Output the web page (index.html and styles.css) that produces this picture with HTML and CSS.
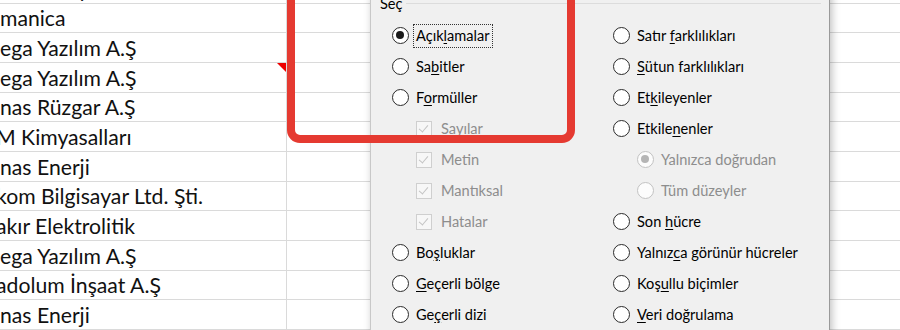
FILE: index.html
```html
<!DOCTYPE html>
<html lang="tr">
<head>
    <meta charset="UTF-8">
    <title>Git - Özel</title>
    <link rel="stylesheet" href="styles.css">
</head>
<body>
    <div class="sheet">
        <div class="row"><div class="cell name"><span>ılmaz Boya</span></div><div class="cell"></div></div>
        <div class="row"><div class="cell name"><span>manica</span></div><div class="cell"></div></div>
        <div class="row"><div class="cell name"><span>ega Yazılım A.Ş</span></div><div class="cell"></div></div>
        <div class="row"><div class="cell name has-note"><span>ega Yazılım A.Ş</span></div><div class="cell"></div></div>
        <div class="row"><div class="cell name"><span>nas Rüzgar A.Ş</span></div><div class="cell"></div></div>
        <div class="row"><div class="cell name"><span class="cut">M Kimyasalları</span></div><div class="cell"></div></div>
        <div class="row"><div class="cell name"><span>nas Enerji</span></div><div class="cell"></div></div>
        <div class="row"><div class="cell name"><span class="cut">kom Bilgisayar Ltd. Şti.</span></div><div class="cell"></div></div>
        <div class="row"><div class="cell name"><span class="cut">akır Elektrolitik</span></div><div class="cell"></div></div>
        <div class="row"><div class="cell name"><span>ega Yazılım A.Ş</span></div><div class="cell"></div></div>
        <div class="row"><div class="cell name"><span class="cut">adolum İnşaat A.Ş</span></div><div class="cell"></div></div>
        <div class="row"><div class="cell name"><span>nas Enerji</span></div><div class="cell"></div></div>
        <div class="row"><div class="cell name"><span></span></div><div class="cell"></div></div>
    </div>

    <!-- vurgulama çerçevesi -->
    <div class="highlight"></div>

    <div class="dialog">
        <div class="group-title"><span>Seç</span><div class="group-line"></div></div>
        <div class="options">
            <div class="col">
                <div class="opt"><span class="radio checked"></span><span class="label focus">Açık<u>l</u>amalar</span></div>
                <div class="opt"><span class="radio"></span><span class="label">Sa<u>b</u>itler</span></div>
                <div class="opt"><span class="radio"></span><span class="label">F<u>o</u>rmüller</span></div>
                <div class="opt sub disabled"><span class="check"></span><span class="label">Sayılar</span></div>
                <div class="opt sub disabled"><span class="check"></span><span class="label">Metin</span></div>
                <div class="opt sub disabled"><span class="check"></span><span class="label">Mantıksal</span></div>
                <div class="opt sub disabled"><span class="check"></span><span class="label">Hatalar</span></div>
                <div class="opt"><span class="radio"></span><span class="label">Bo<u>ş</u>luklar</span></div>
                <div class="opt"><span class="radio"></span><span class="label"><u>G</u>eçerli bölge</span></div>
                <div class="opt"><span class="radio"></span><span class="label">Ge<u>ç</u>erli dizi</span></div>
            </div>
            <div class="col">
                <div class="opt"><span class="radio"></span><span class="label">Satır <u>f</u>arklılıkları</span></div>
                <div class="opt"><span class="radio"></span><span class="label"><u>S</u>ütun farklılıkları</span></div>
                <div class="opt"><span class="radio"></span><span class="label">Et<u>k</u>ileyenler</span></div>
                <div class="opt"><span class="radio"></span><span class="label">Etkile<u>n</u>enler</span></div>
                <div class="opt sub disabled"><span class="radio checked"></span><span class="label">Yalnızca doğrudan</span></div>
                <div class="opt sub disabled"><span class="radio"></span><span class="label">Tüm düzeyler</span></div>
                <div class="opt"><span class="radio"></span><span class="label">Son <u>h</u>ücre</span></div>
                <div class="opt"><span class="radio"></span><span class="label">Yalnız<u>c</u>a görünür hücreler</span></div>
                <div class="opt"><span class="radio"></span><span class="label">Koş<u>u</u>llu biçimler</span></div>
                <div class="opt"><span class="radio"></span><span class="label"><u>V</u>eri doğrulama</span></div>
            </div>
        </div>
    </div>
</body>
</html>
```

FILE: styles.css
```css
body {
    margin: 0;
    width: 900px;
    height: 330px;
    overflow: hidden;
    position: relative;
    background-color: #fff;
    font-family: 'Lato', sans-serif;
    color: #000;
}
.sheet {
    margin-top: -26px;
}
.row {
    display: flex;
    height: 29.67px;
    box-sizing: border-box;
    border-bottom: 1px solid #dadada;
}
.cell {
    flex: 1;
    display: flex;
    align-items: flex-end;
    overflow: hidden;
    white-space: nowrap;
}
.cell.name {
    flex: none;
    width: 287px;
    box-sizing: border-box;
    border-right: 1px solid #dadada;
    position: relative;
    font-size: 21.2px;
    color: #111;
    padding: 0 0 1px 0;
}
.cut {
    margin-left: -4px;
}
.has-note::after {
    content: '';
    position: absolute;
    top: 0;
    right: 0;
    border-top: 9px solid #e00;
    border-left: 9px solid transparent;
}

.highlight {
    position: absolute;
    left: 287px;
    top: -30px;
    width: 288px;
    height: 173px;
    box-sizing: border-box;
    border: 8px solid #e53a31;
    border-radius: 13px;
    z-index: 2;
}

.dialog {
    position: absolute;
    left: 370px;
    top: -8px;
    width: 460px;
    height: 360px;
    box-sizing: border-box;
    background-color: #f0f0f0;
    border-left: 1px solid #c8c8c8;
    border-right: 1px solid #9a9a9a;
    box-shadow: 2px 0 8px rgba(0,0,0,0.25);
    font-family: 'Lato', sans-serif;
    font-size: 14.6px;
    padding: 0 8px 0 8px;
    z-index: 1;
}
.group-title {
    display: flex;
    align-items: center;
    height: 22px;
}
.group-title span {
    padding: 0 3px 0 1px;
}
.group-line {
    flex: 1;
    border-top: 1px solid #dcdcdc;
}
.options {
    display: flex;
    padding: 6px 0 0 13px;
}
.col {
    display: flex;
    flex-direction: column;
}
.col:first-child {
    width: 221px;
}
.opt {
    display: flex;
    align-items: center;
    height: 31px;
    gap: 5px;
}
.opt.sub {
    padding-left: 24px;
}
.label {
    padding: 2px 2px;
    line-height: 18px;
}
.label u {
    text-underline-offset: 2px;
}
.focus {
    outline: 1px dotted #333;
}
.disabled .label {
    color: #8d8d8d;
}
.radio {
    width: 17px;
    height: 17px;
    box-sizing: border-box;
    border: 1.8px solid #2b2b2b;
    border-radius: 50%;
    background-color: #fff;
    position: relative;
    flex: none;
}
.radio.checked::after {
    content: '';
    position: absolute;
    left: 2.7px;
    top: 2.7px;
    width: 8px;
    height: 8px;
    border-radius: 50%;
    background-color: #1a1a1a;
}
.disabled .radio {
    border-color: #c2c2c2;
    background-color: #fcfcfc;
}
.disabled .radio.checked::after {
    background-color: #b5b5b5;
}
.check {
    width: 16px;
    height: 16px;
    box-sizing: border-box;
    border: 1px solid #cfcfcf;
    background-color: #f7f7f7;
    position: relative;
    flex: none;
    margin-right: 2px;
}
.check::after {
    content: '';
    position: absolute;
    left: 4px;
    top: 1px;
    width: 4px;
    height: 8px;
    border: solid #c4c4c4;
    border-width: 0 1.3px 1.3px 0;
    transform: rotate(40deg);
}
```
